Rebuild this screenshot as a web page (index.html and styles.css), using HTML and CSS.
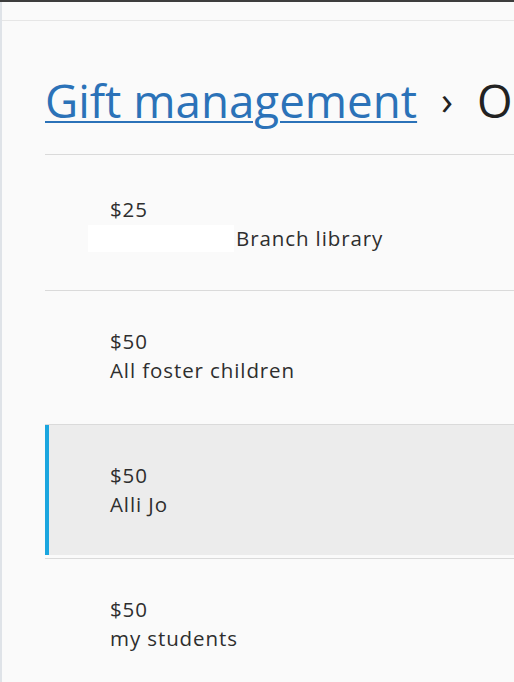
FILE: index.html
```html
<!DOCTYPE html>
<html>
<head>
<meta charset="utf-8">
<link rel="stylesheet" href="styles.css">
</head>
<body>
<div class="topbar"></div>
<div class="page">
  <div class="subbar"></div>
  <main class="content">
    <h1 class="crumbs"><a class="crumb-link" href="#">Gift management</a><span class="sep">›</span><span class="current">O</span></h1>
    <ul class="list">
      <li class="item">
        <div class="inner">
          <div class="amount">$25</div>
          <div class="name"><span class="redact"></span>Branch library</div>
        </div>
      </li>
      <li class="item">
        <div class="inner">
          <div class="amount">$50</div>
          <div class="name">All foster children</div>
        </div>
      </li>
      <li class="item selected">
        <div class="inner">
          <div class="amount">$50</div>
          <div class="name">Alli Jo</div>
        </div>
      </li>
      <li class="item">
        <div class="inner">
          <div class="amount">$50</div>
          <div class="name">my students</div>
        </div>
      </li>
    </ul>
  </main>
</div>
</body>
</html>
```

FILE: styles.css
```css
html, body {
  margin: 0;
  padding: 0;
  height: 100%;
  overflow: hidden;
}
body {
  background: #fbfbfb;
  font-family: "Open Sans", "Noto Sans", sans-serif;
  color: #333;
}
.topbar {
  height: 2px;
  background: #3d3d3d;
}
.page {
  border-left: 2px solid #dfe3e8;
  min-height: 680px;
  background: #fafafa;
}
.subbar {
  height: 18px;
  border-bottom: 1px solid #e6e6e6;
}
.content {
  padding-left: 43px;
}
.crumbs {
  margin: 0;
  padding-top: 49px;
  height: 84px;
  font-weight: 400;
  font-size: 45.7px;
  letter-spacing: 0;
  line-height: 60px;
  white-space: nowrap;
  overflow: hidden;
  border-bottom: 1px solid #dadada;
}
.crumb-link {
  color: #2b72b8;
  text-decoration: underline;
  text-decoration-thickness: 2px;
  text-underline-offset: 3px;
}
.sep {
  color: #222;
  font-size: 40px;
  margin: 0 24px 0 24px;
  vertical-align: 3px;
}
.current {
  color: #222;
}
.list {
  list-style: none;
  margin: 0;
  padding: 0;
}
.item {
  border-bottom: 1px solid #dadada;
  padding-bottom: 3px;
}
.inner {
  height: 130px;
  padding-left: 65px;
  display: flex;
  flex-direction: column;
  justify-content: center;
  font-size: 20.5px;
  letter-spacing: 0.9px;
  line-height: 29px;
  color: #2e2e2e;
}
.item:first-child .inner {
  padding-top: 6px;
  height: 126px;
}
.item.selected .inner {
  background: #ececec;
  border-left: 4px solid #1aa6df;
  padding-left: 61px;
}
.name {
  display: flex;
  align-items: center;
}
.redact {
  display: inline-block;
  width: 146px;
  height: 27px;
  background: #ffffff;
  margin-left: -22px;
  margin-right: 2px;
}
```
